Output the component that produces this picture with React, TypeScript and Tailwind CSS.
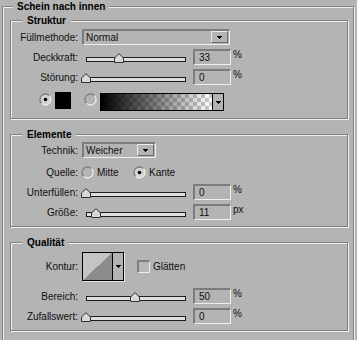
import type { ReactNode, CSSProperties } from "react";

const SUNKEN =
  "border-t-2 border-l-2 border-r border-b border-t-[#7c7c7c] border-l-[#7c7c7c] border-r-[#eeeeee] border-b-[#eeeeee]";

function Arrow() {
  return (
    <svg width="5" height="3" viewBox="0 0 5 3" shapeRendering="crispEdges">
      <path d="M0 0h5v1H0zM1 1h3v1H1zM2 2h1v1H2z" fill="#000" />
    </svg>
  );
}

function Radio({ checked = false }: { checked?: boolean }) {
  return (
    <svg width="13" height="13" viewBox="0 0 13 13" className="shrink-0">
      <circle cx="6.5" cy="6.5" r="5" fill={checked ? "#d2d2d2" : "none"} />
      <path d="M2.6 10.4A5.5 5.5 0 0 1 10.4 2.6" fill="none" stroke="#7e7e7e" strokeWidth="1.3" />
      <path d="M10.4 2.6A5.5 5.5 0 0 1 2.6 10.4" fill="none" stroke="#ececec" strokeWidth="1.3" />
      {checked && <circle cx="6.5" cy="6.5" r="1.8" fill="#000" />}
    </svg>
  );
}

function Group({ title, className = "", children }: { title: string; className?: string; children: ReactNode }) {
  return (
    <div
      className={`relative w-[338px] border border-[#808080] shadow-[inset_1px_1px_0_#f2f2f2,1px_1px_0_#f2f2f2] ${className}`}
    >
      <span className="absolute -top-[7px] left-[11px] bg-[#b4b4b4] px-[5px] text-[10px] leading-[13px] font-bold text-black">
        {title}
      </span>
      {children}
    </div>
  );
}

function Row({ label, className = "", children }: { label: string; className?: string; children?: ReactNode }) {
  return (
    <div className={`flex h-[16px] items-center ${className}`}>
      <span className="w-[67px] shrink-0 text-right">{label}</span>
      {children}
    </div>
  );
}

function Select({ value, width }: { value: string; width: string }) {
  return (
    <div className={`ml-[4px] flex h-[16px] ${width} items-center ${SUNKEN} pl-[2px]`}>
      <span className="flex-1 leading-[13px]">{value}</span>
      <div className="mr-[1px] flex h-[12px] w-[17px] shrink-0 items-center justify-center self-start border border-t-[#ececec] border-l-[#ececec] border-r-[#6a6a6a] border-b-[#6a6a6a] bg-[#b4b4b4]">
        <Arrow />
      </div>
    </div>
  );
}

function SliderRow({
  label,
  thumb,
  value,
  unit,
  className = "",
}: {
  label: string;
  thumb: number;
  value: string;
  unit: string;
  className?: string;
}) {
  const thumbStyle: CSSProperties = { left: thumb - 81 };
  return (
    <Row label={label} className={className}>
      <div className="relative ml-[3px] h-[16px] w-[105px] shrink-0">
        <div className="mt-[8px] ml-[5px] h-[5px] w-[100px] border border-[#1c1c1c] bg-[#dedede]" />
        <svg width="10" height="10" viewBox="0 0 10 10" className="absolute top-[4px]" style={thumbStyle}>
          <path d="M0.5 9.5V5L5 0.7L9.5 5V9.5Z" fill="#d8d8d8" stroke="#333" />
        </svg>
      </div>
      <div className={`ml-[7px] h-[16px] w-[38px] ${SUNKEN} pl-[4px] leading-[13px]`}>{value}</div>
      <span className="ml-[2px] self-start leading-[12px]">{unit}</span>
    </Row>
  );
}

export default function App() {
  return (
    <div className="h-[340px] w-[357px] overflow-hidden bg-[#b4b4b4] pt-[6px] font-['Liberation_Sans',Arial,sans-serif] text-[10px] text-[#101010]">
      <div className="relative ml-[2px] h-[360px] w-[352px] border border-[#808080] shadow-[inset_1px_1px_0_#f2f2f2,1px_1px_0_#f2f2f2]">
        <span className="absolute -top-[7px] left-[10px] bg-[#b4b4b4] px-[4px] text-[10px] leading-[13px] font-bold text-black">
          Schein nach innen
        </span>

        <Group title="Struktur" className="mt-[13px] ml-[7px] pt-[8px] pb-[7px]">
          <Row label="Füllmethode:">
            <Select value="Normal" width="w-[148px]" />
          </Row>
          <SliderRow label="Deckkraft:" thumb={114} value="33" unit="%" className="mt-[4px]" />
          <SliderRow label="Störung:" thumb={81} value="0" unit="%" className="mt-[4px]" />
          <div className="mt-[7px] flex h-[19px] items-start pl-[28px]">
            <div className="mt-[1px]">
              <Radio checked />
            </div>
            <div className="ml-[3px] h-[17px] w-[16px] bg-black" />
            <div className="mt-[1px] ml-[13px]">
              <Radio />
            </div>
            <div className="mt-[1px] ml-[3px] flex h-[18px] w-[124px] border border-black">
              <div className="flex-1 bg-[repeating-conic-gradient(#cbcbcb_0%_25%,#ffffff_0%_50%)] bg-[length:8px_8px]">
                <div className="h-full w-full bg-linear-to-r from-black to-transparent" />
              </div>
              <div className="flex w-[11px] items-center justify-center border-l border-black bg-[#b4b4b4]">
                <Arrow />
              </div>
            </div>
          </div>
        </Group>

        <Group title="Elemente" className="mt-[15px] ml-[7px] pt-[7px] pb-[6px]">
          <Row label="Technik:">
            <Select value="Weicher" width="w-[74px]" />
          </Row>
          <Row label="Quelle:" className="mt-[6px]">
            <div className="ml-[3px] flex w-[52px] items-center">
              <Radio />
              <span className="ml-[3px]">Mitte</span>
            </div>
            <Radio checked />
            <span className="ml-[3px]">Kante</span>
          </Row>
          <SliderRow label="Unterfüllen:" thumb={81} value="0" unit="%" className="mt-[4px]" />
          <SliderRow label="Größe:" thumb={91} value="11" unit="px" className="mt-[4px]" />
        </Group>

        <Group title="Qualität" className="mt-[15px] ml-[7px] pt-[9px] pb-[6px]">
          <div className="flex h-[29px] items-center">
            <span className="w-[67px] shrink-0 text-right">Kontur:</span>
            <div className="ml-[4px] flex h-[29px] w-[42px] border border-black shadow-[1px_1px_0_#e6e6e6]">
              <div className="w-[29px] bg-[linear-gradient(to_top_left,#8c8c8c_50%,#c4c4c4_50%)]" />
              <div className="flex w-[11px] items-center justify-center border-l border-black bg-[#b4b4b4]">
                <Arrow />
              </div>
            </div>
            <div className="ml-[13px] h-[13px] w-[13px] border-t-2 border-l-2 border-r border-b border-t-[#7e7e7e] border-l-[#7e7e7e] border-r-[#eeeeee] border-b-[#eeeeee] bg-[#b8b8b8]" />
            <span className="ml-[3px]">Glätten</span>
          </div>
          <SliderRow label="Bereich:" thumb={130} value="50" unit="%" className="mt-[7px]" />
          <SliderRow label="Zufallswert:" thumb={81} value="0" unit="%" className="mt-[4px]" />
        </Group>
      </div>
    </div>
  );
}
